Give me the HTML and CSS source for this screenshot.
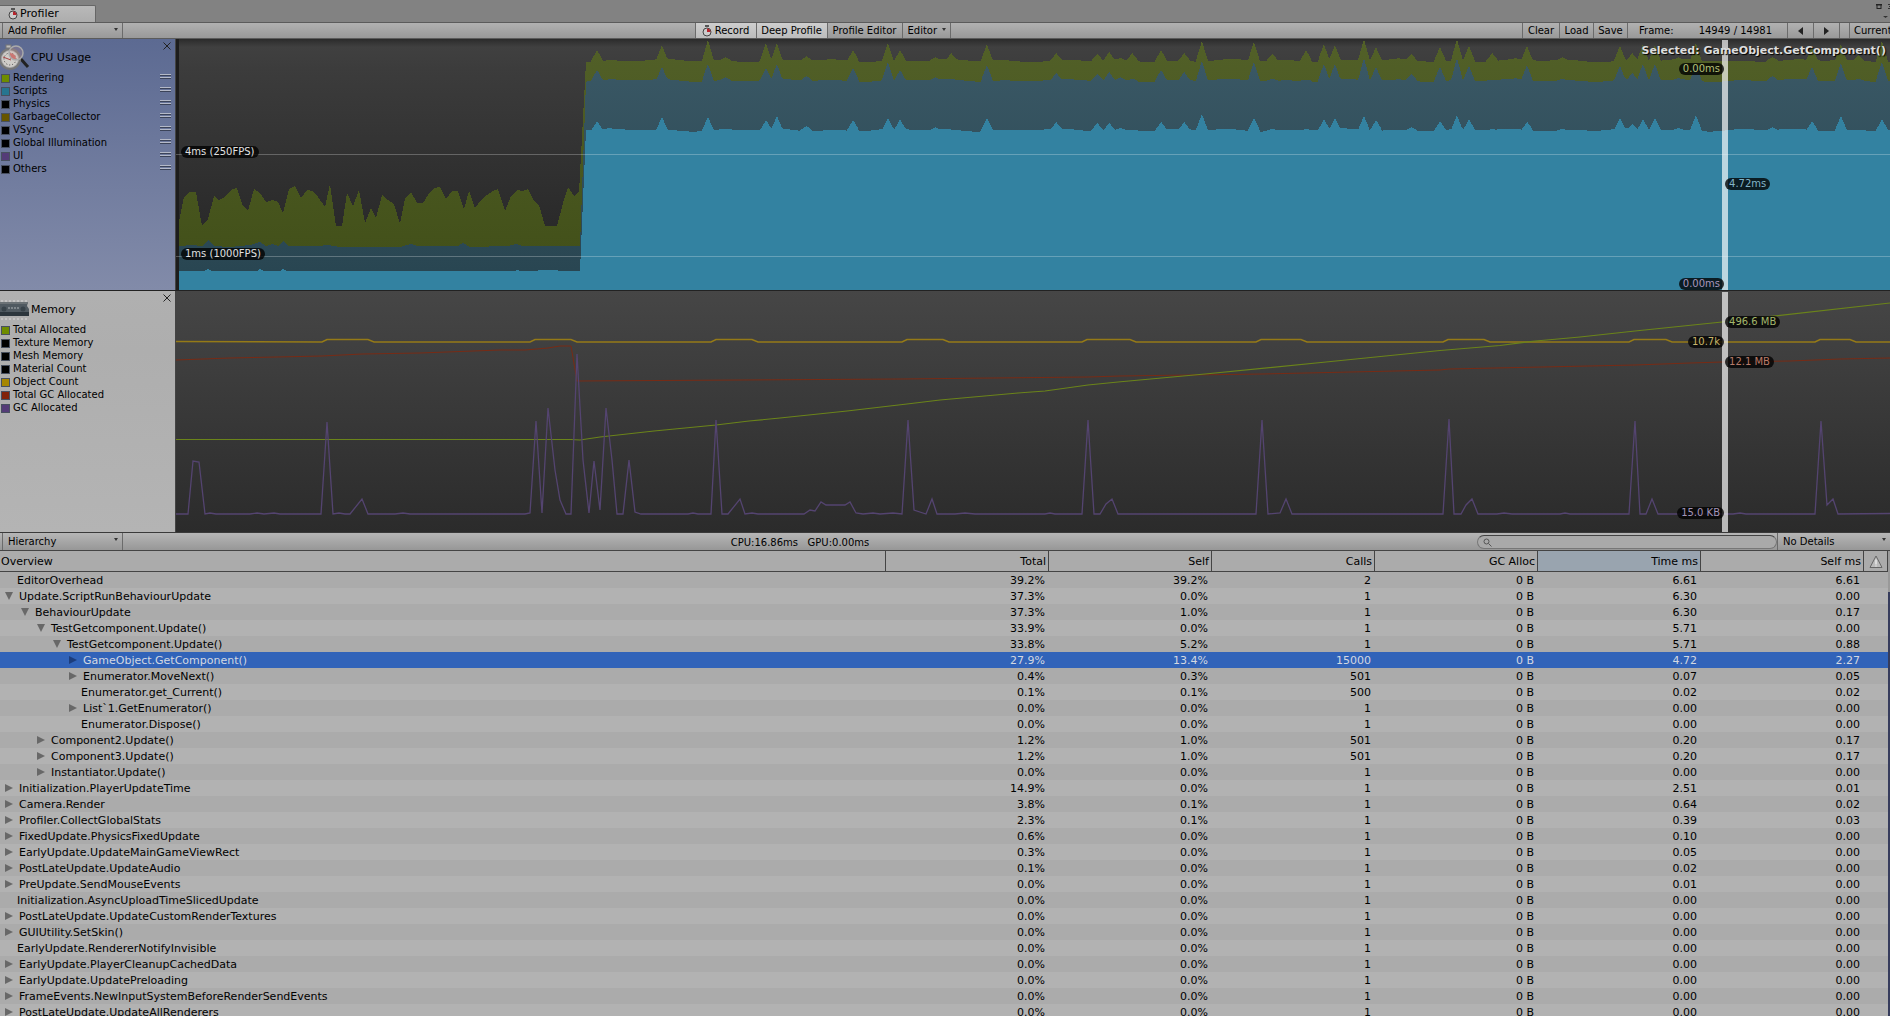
FILE: index.html
```html
<!DOCTYPE html>
<html lang="en">
<head>
<meta charset="utf-8">
<title>Profiler</title>
<link rel="stylesheet" href="styles.css">
</head>
<body>
<svg class="defs" width="0" height="0" aria-hidden="true">
  <symbol id="watch" viewBox="0 0 10 12">
    <rect x="3" y="0" width="4" height="2" fill="#555"/>
    <circle cx="5" cy="7" r="4" fill="#ccc" stroke="#444" stroke-width="1"/>
    <path d="M5 7V3.500A3.500 3.500 0 0 1 8.500 7Z" fill="#b8232c"/>
  </symbol>
</svg>
<header class="tabs">
  <button class="tab" type="button"><svg width="10" height="12"><use href="#watch"/></svg>Profiler</button>
  <div class="window-tools">
    <svg width="14" height="18" viewBox="0 0 14 18"><rect x="1" y="4.500" width="4" height="4" fill="none" stroke="#222"/><path d="M0 4h6v1.500H0z" fill="#222"/><path d="M12 4h2v1h-2zM13 6h1v1h-1zM12 8h2v1h-2z" fill="#333"/><path d="M7 16h5l-2.500 2z" fill="#333"/></svg>
  </div>
</header>
<nav class="toolbar">
  <span class="drop"><select aria-label="Add Profiler"><option>Add Profiler</option></select></span>
  <span class="space"></span>
  <div class="group">
    <button class="on record" type="button"><svg width="10" height="12"><use href="#watch"/></svg>Record</button>
    <button class="on deep" type="button">Deep Profile</button>
    <button class="pe" type="button">Profile Editor</button>
    <span class="drop editor"><select aria-label="Editor"><option>Editor</option></select></span>
  </div>
  <span class="space"></span>
  <div class="group right">
    <button class="clear" type="button">Clear</button>
    <button class="load" type="button">Load</button>
    <button class="load" type="button">Save</button>
    <span class="frame"><span>Frame:</span><span>14949 / 14981</span></span>
    <button class="step" type="button" aria-label="Previous frame"><svg width="5" height="8"><path d="M5 0v8L0 4z"/></svg></button>
    <button class="step" type="button" aria-label="Next frame"><svg width="5" height="8"><path d="M0 0v8l5-4z"/></svg></button>
    <span class="gap"></span>
    <button class="current" type="button">Current</button>
  </div>
</nav>
<section class="module cpu">
  <aside class="legend">
    <button class="close" type="button" aria-label="Close CPU Usage"><svg width="8" height="8"><path d="M.5.5l7 7m0-7l-7 7"/></svg></button>
    <h2><svg width="30" height="28" viewBox="0 0 30 28">
      <path d="M20 14l8 9" stroke="#222" stroke-width="3"/>
      <rect x="6" y="1" width="5" height="3" fill="#bbb" stroke="#777"/>
      <circle cx="10" cy="15" r="10" fill="#aaa" stroke="#777" stroke-width="2"/>
      <circle cx="10" cy="15" r="8" fill="#d0cdc8"/>
      <circle cx="10" cy="15" r="6" fill="none" stroke="#444" stroke-dasharray="1 2"/>
      <path d="M10 15V9a6 6 0 0 1 6 6z" fill="#c66d69"/>
      <path d="M3 13l8 3" stroke="#a44" stroke-width="1"/>
      <circle cx="16" cy="9" r="7" fill="#e29a9433" stroke="#aaa" stroke-width="1.500"/>
    </svg>CPU Usage</h2>
    <ul>
      <li class="green">Rendering</li><li class="blue">Scripts</li><li>Physics</li><li class="olive">GarbageCollector</li><li>VSync</li><li>Global Illumination</li><li class="purple">UI</li><li>Others</li>
    </ul>
  </aside>
  <div class="chart">
    <svg id="cpu-chart" viewBox="176 39 1714 251" preserveAspectRatio="none" shape-rendering="crispEdges">
      <defs><linearGradient id="g-green" x1="0" y1="40" x2="0" y2="250" gradientUnits="userSpaceOnUse"><stop stop-color="#526028"/><stop offset="1" stop-color="#43511a"/></linearGradient>
      <linearGradient id="g-teal" x1="0" y1="60" x2="0" y2="270" gradientUnits="userSpaceOnUse"><stop stop-color="#3a5865"/><stop offset="1" stop-color="#294652"/></linearGradient></defs>
      <rect x="176" y="39" width="3" height="251" fill="#1d1d1d"/>
    </svg>
    <div class="line four"><span class="pill">4ms (250FPS)</span></div>
    <div class="line one"><span class="pill">1ms (1000FPS)</span></div>
    <div class="cursor">
      <span class="pill before y1">0.00ms</span>
      <span class="pill after y2">4.72ms</span>
      <span class="pill before y3">0.00ms</span>
    </div>
    <div class="selected">Selected: GameObject.GetComponent()</div>
  </div>
</section>
<section class="module memory">
  <aside class="legend">
    <button class="close" type="button" aria-label="Close Memory"><svg width="8" height="8"><path d="M.5.5l7 7m0-7l-7 7"/></svg></button>
    <h2><svg width="30" height="22" viewBox="0 0 30 22">
      <path d="M1 2h27M1 20h27" stroke="#c4c4c4" stroke-width="2" stroke-dasharray="2 2"/>
      <path d="M0 3h28l-1 4 2 3v7H0z" fill="#505a61"/>
      <path d="M0 13h29v4H0z" fill="#2c363d"/><path d="M0 3h28v2H0z" fill="#6b7276"/>
      <circle cx="4" cy="10" r="2.500" fill="#38434a"/><circle cx="23" cy="10" r="2.500" fill="#38434a"/>
      <path d="M8 9h11" stroke="#7f878c" stroke-width="2" stroke-dasharray="2 1"/>
    </svg>Memory</h2>
    <ul>
      <li class="green">Total Allocated</li><li>Texture Memory</li><li>Mesh Memory</li><li>Material Count</li><li class="yellow">Object Count</li><li class="red">Total GC Allocated</li><li class="purple">GC Allocated</li>
    </ul>
  </aside>
  <div class="chart">
    <svg id="memory-chart" viewBox="176 291 1714 241" preserveAspectRatio="none"></svg>
    <div class="cursor">
      <span class="pill after m1">496.6 MB</span>
      <span class="pill before m2">10.7k</span>
      <span class="pill after m3">12.1 MB</span>
      <span class="pill before m4">15.0 KB</span>
    </div>
  </div>
</section>
<nav class="toolbar lower">
  <span class="drop"><select aria-label="View"><option>Hierarchy</option></select></span>
  <output>CPU:16.86ms&nbsp;&nbsp; GPU:0.00ms</output>
  <label class="search"><svg width="9" height="9" viewBox="0 0 9 9"><circle cx="3.500" cy="3.500" r="2.500"/><path d="M5.500 5.500l3 3"/></svg><input type="search" aria-label="Search"></label>
  <span class="drop details"><select aria-label="Details"><option>No Details</option></select></span>
</nav>
<main class="tree">
  <table>
    <colgroup><col><col class="num"><col class="num"><col class="num"><col class="num"><col class="num"><col class="num"><col class="warn"></colgroup>
    <thead><tr><th>Overview</th><th>Total</th><th>Self</th><th>Calls</th><th>GC Alloc</th><th class="sorted">Time ms</th><th>Self ms</th><th><svg width="14" height="14" viewBox="0 0 14 14"><path d="M7 1L13 12.500H1z" fill="#bbb" stroke="#666" stroke-linejoin="round"/><path d="M7 4.500v5m0 1v1" stroke="#ddd" stroke-width="2"/></svg></th></tr></thead>
    <tbody id="rows"></tbody>
  </table>
  <div class="scroll"></div>
</main>
<script src="profiler.js"></script>
</body>
</html>
```
FILE: styles.css
```css
* { box-sizing: border-box; }
body {
  margin: 0; height: 100vh; overflow: hidden;
  display: flex; flex-direction: column;
  background: #adadad; color: #000;
  font: 10px/12px "DejaVu Sans", Verdana, sans-serif;
}
button, select, input { font: inherit; color: inherit; margin: 0; padding: 0; border: 0; border-radius: 0; background: none; }
.defs { position: absolute; }

.tabs { flex: none; height: 22px; padding-top: 5px; background: #828282; display: flex; justify-content: space-between; }
.tab {
  width: 96px; padding-left: 8px; display: flex; align-items: center; gap: 2px;
  background: linear-gradient(#b9b9b9, #adadad); border: solid #666; border-width: 1px 1px 0 0; border-radius: 0 2px 0 0;
  font-size: 11px;
}
.window-tools { width: 14px; margin-top: -5px; }
.window-tools svg { display: block; }

.toolbar {
  flex: none; height: 17px; padding-left: 2px; display: flex;
  background: linear-gradient(#b1b1b1, #999); border: solid #5b5b5b; border-width: 1px 0;
  overflow: hidden;
}
.toolbar button, .drop { border-right: 1px solid #6b6b6b; white-space: nowrap; }
.drop { position: relative; width: 121px; border-left: 1px solid #6b6b6b; }
.drop select { appearance: none; width: 100%; height: 100%; padding-left: 5px; display: block; }
.drop::after {
  content: ""; position: absolute; right: 4px; top: 5px;
  border: solid transparent; border-width: 3px 2px 0; border-top-color: #333;
}
.space { flex: 1; }
.group { display: flex; }
.group .on { background: linear-gradient(#cecece, #bcbcbc); }
.toolbar .record { width: 62px; border-left: 1px solid #6b6b6b; display: flex; align-items: center; justify-content: center; gap: 3px; }
.deep { width: 71px; }
.pe { width: 75px; }
.editor { width: 48px; border-left: 0; }
.right { width: 368px; overflow: hidden; }
.right > * { flex: none; }
.right .clear { width: 38px; border-left: 1px solid #6b6b6b; }
.load { width: 34px; }
.frame { width: 160px; padding: 2px 15px 0 11px; display: flex; justify-content: space-between; border-right: 1px solid #6b6b6b; }
.step { width: 26px; display: grid; place-items: center; }
.step svg { fill: #222; }
.gap { width: 10px; border-right: 1px solid #6b6b6b; }
.toolbar .current { width: 60px; padding-left: 4px; text-align: left; }

.module { flex: none; height: 252px; display: flex; border-bottom: 1px solid #222; }
.memory { height: 242px; border-bottom-color: #3a3a3a; }
.legend { position: relative; flex: none; width: 176px; border-right: 1px solid #444; background: linear-gradient(#b0b0b0, #aeaeae 25%, #b4b4b4); }
.cpu .legend { background: linear-gradient(#5c6a92, #828ba9); }
.close { position: absolute; right: 4px; top: 3px; width: 8px; height: 8px; }
.close svg { display: block; fill: none; stroke: #222; }
.legend h2 { margin: 0; height: 32px; padding-top: 5px; display: flex; align-items: center; gap: 1px; font-size: 11px; font-weight: 400; }
.legend ul { margin: 0; padding: 0; list-style: none; }
.legend li { height: 13px; line-height: 14px; padding-left: 13px; position: relative; }
.legend li::before {
  content: ""; position: absolute; left: 1px; top: 3px; width: 7px; height: 7px;
  border: 1px solid #48505f; background: #000;
}
.cpu li::after {
  content: ""; position: absolute; right: 4px; top: 3px; width: 11px; height: 5px;
  background: linear-gradient(#b4b9c8 1px, #3b4359 1px, #3b4359 2px, transparent 2px, transparent 3px, #b4b9c8 3px, #b4b9c8 4px, #3b4359 4px);
}
.legend .green::before { background: #6e8c00; }
.legend .blue::before { background: #267590; }
.legend .olive::before { background: #665500; }
.legend .purple::before { background: #543b77; }
.legend .yellow::before { background: #a68600; }
.legend .red::before { background: #82230a; }

.chart { position: relative; flex: 1; min-width: 0; overflow: hidden; background: linear-gradient(#2b2b2b, #404040 8px, #3c3c3c 30px, #262626 220px); }
.memory .chart { background: linear-gradient(#464646, #2b2b2b); }
.chart > svg { display: block; width: 100%; height: 100%; }
.line { position: absolute; left: 0; right: 0; height: 1px; background: rgba(255, 255, 255, .25); }
.line .pill { left: 5px; top: -8px; color: #e0e0e0; }
.four { top: 115px; }
.one { top: 217px; }
.pill { position: absolute; height: 12px; padding: 0 4px; border-radius: 6px; background: rgba(0, 0, 0, .78); line-height: 12px; white-space: nowrap; }
.cursor { position: absolute; left: 90.2%; top: 1px; bottom: 0; width: 6px; background: rgba(255, 255, 255, .67); }
.before { right: 4px; }
.after { left: 3px; }
.y1 { top: 23px; color: #b4c078; }
.y2 { top: 138px; color: #83b4c8; }
.y3 { top: 238px; color: #a796bb; }
.m1 { top: 24px; color: #a3b66c; }
.m2 { top: 44px; color: #c9b66a; }
.m3 { top: 64px; color: #b97a68; }
.m4 { top: 215px; color: #a394b8; }
.selected { position: absolute; left: 85.5%; top: 5px; font-size: 11px; line-height: 14px; font-weight: 700; color: #ddd; text-shadow: 1px 1px 1px #000; white-space: nowrap; }

.lower { height: 18px; background: linear-gradient(#b6b6b6, #979797); border-top: 0; border-bottom: 1px solid #444; }
.lower output { flex: 1; padding-top: 4px; text-align: center; }
.search { width: 300px; height: 14px; margin-top: 2px; padding: 0 5px; display: flex; align-items: center; gap: 3px; border: 1px solid #777; border-top-color: #444; border-radius: 7px; background: #a9a9a9; }
.search svg { fill: none; stroke: #555; }
.search input { flex: 1; outline: 0; min-width: 0; height: 12px; }
.details { width: 113px; border-right: 0; }

.tree { flex: 1; min-height: 0; overflow: hidden; display: flex; font-size: 11px; line-height: 14px; }
.tree table { flex: 1; width: 0; table-layout: fixed; border-collapse: separate; border-spacing: 0; align-self: flex-start; }
.num { width: 163px; }
.warn { width: 24px; }
.tree th { height: 21px; padding: 2px 2px 0; font-weight: 400; text-align: right; border: solid #444; border-width: 0 1px 1px 0; background: #ababab; }
.tree th:first-child { text-align: left; padding-left: 1px; }
.tree th.sorted { background: #99a4af; }
.tree th svg { display: block; margin: 0 auto; }
.tree td { height: 16px; padding: 2px 4px 0 0; text-align: right; white-space: nowrap; }
.tree tr > :first-child { text-align: left; }
.tree tbody tr { background: #ababab; }
.tree tbody tr:nth-child(even) { background: #b2b2b2; }
.tree tbody tr.active { background: #3163b9; color: #d3d8e2; }
.name { display: flex; align-items: center; padding-left: calc(5px + var(--depth) * 16px); }
.name button { width: 8px; height: 8px; margin: 0 6px 2px 0; flex: none; background: #686868; clip-path: polygon(0 0, 100% 50%, 0 100%); }
.name button.open { clip-path: polygon(0 0, 100% 0, 50% 100%); }
.name.leaf { padding-left: calc(17px + var(--depth) * 16px); }
.active .name button { background: #1c3d7c; }
.scroll { width: 2px; background: linear-gradient(#999 41px, #363c5c 41px); }
```
FILE: profiler.js
```js
const NS = 'http://www.w3.org/2000/svg';
const cpu = document.getElementById('cpu-chart');
const memory = document.getElementById('memory-chart');

function shape(parent, tag, attrs) {
  const el = document.createElementNS(NS, tag);
  for (const key in attrs) el.setAttribute(key, attrs[key]);
  parent.appendChild(el);
}

// Frames before deep profiling: x and the top of each stacked area.
const idle = {
  green: '179,222 184,197 190,192 196,192 202,226 208,219 214,196 219,200 225,197 232,189 237,188 243,206 248,211 254,189 260,193 266,202 272,200 278,202 283,213 289,189 295,186 301,198 307,190 313,191 318,197 325,207 330,184 336,226 342,226 347,193 353,206 359,190 365,223 371,208 376,218 382,195 388,200 394,204 400,224 405,198 411,192 417,203 423,203 428,195 434,188 440,187 446,199 452,191 458,191 464,209 469,191 475,208 481,200 487,195 493,191 498,189 505,211 511,196 517,190 523,191 528,189 534,201 539,205 545,226 557,226 563,203 568,187 574,196 579,192',
  teal: '179,246 192,245 202,246 208,240 214,246 230,247 250,245 260,242 266,246 272,244 278,246 283,241 289,246 318,246 328,245 340,247 400,247 411,244 417,246 458,246 463,243 470,247 508,246 516,244 522,246 580,246',
  blue: '179,271 204,271 208,269 212,271 257,271 260,269 264,271 280,271 283,269 287,271 515,271 517,270 520,271 556,270 560,271 580,271'
};

// Spikes while deep profiling: x, then the top of rendering, overhead and scripts.
const spikes = [
  [597,50,70,121],[662,45,67,117],[708,40,64,117],[725,57,77,129],[766,43,68,120],[777,43,64,116],
  [806,56,76,126],[853,50,68,120],[888,43,62,118],[900,50,70,119],[935,57,77,127],[951,53,80,130],
  [987,44,65,118],[1056,53,73,122],[1097,54,74,123],[1109,52,72,123],[1120,58,77,128],[1132,53,79,130],
  [1161,50,70,122],[1184,53,72,122],[1202,41,61,114],[1254,42,62,118],[1272,54,79,129],[1306,50,80,129],
  [1324,44,64,119],[1335,45,64,118],[1364,39,58,116],[1376,47,67,120],[1398,58,79,130],[1411,54,74,127],
  [1440,47,67,121],[1457,39,58,115],[1469,46,66,119],[1492,53,80,129],[1515,58,78,130],[1527,46,65,122],
  [1562,57,79,129],[1620,46,66,118],[1632,53,73,124],[1643,44,64,119],[1655,45,64,118],[1678,57,78,128],
  [1696,43,64,115],[1772,57,76,127],[1812,47,67,121],[1841,44,63,116],[1858,55,79,130],[1882,41,62,119]
];

function busy(column, base) {
  const points = [];
  for (let x = 586; x <= 1890; x += 1) {
    let y = base + Math.sin(x / 9) * .8 + Math.sin(x / 23 + column) * .8;
    for (const s of spikes) {
      const d = Math.abs(x - s[0]);
      if (d < 6) y = Math.min(y, s[column] + (base - s[column]) * d / 6);
    }
    points.push(x + ',' + Math.round(y));
  }
  return points.join(' ');
}

[['green', 'url(#g-green)', 60.6], ['teal', 'url(#g-teal)', 80.4], ['blue', '#3382a1', 130]].forEach(([key, fill, base], i) => {
  shape(cpu, 'polygon', { points: `179,290 ${idle[key]} ${busy(i + 1, base)} 1890,290`, fill });
});

const bumps = [[322,368],[530,571],[711,752],[902,943],[1082,1130],[1256,1301],[1443,1484],[1629,1666],[1815,1850]];
const objects = '176,341.5 ' + bumps.map(([a, b]) => `${a},342 ${a + 5},339.5 ${b},339.5 ${b + 6},342`).join(' ') + ' 1890,342';

[
  [objects, '#957a17', 1.4],
  ['176,360 230,358 322,356 362,354 420,353 500,350 525,350 548,348 560,346 571,346 577,381 740,380 900,379 1088,377 1120,376 1262,374 1440,370 1449,369 1635,365 1690,363 1722,362 1790,361 1840,359 1890,358', '#782b15', 1],
  ['176,439.5 500,439.5 571,439.5 580,440 600,437 654,431 716,425 749,421 780,418 847,411 907,404 940,400 1018,393 1045,391 1088,385 1118,382 1205,374 1326,362 1440,350.5 1500,345.5 1530,341.5 1580,337 1635,331 1722,322 1765,317 1890,303', '#6b841a', 1.2],
  ['176,514 188,514 193,461 199,462 205,514 210,513 216,514 250,514 257,513 264,514 274,513 280,514 321,514 327,422 333,514 339,513 345,514 350,514 362,499 368,514 395,514 403,513 410,514 525,514 530,513 536,421 542,513 548,408 555,470 560,500 566,514 571,514 577,354 583,460 589,513 594,461 600,510 606,408 612,460 617,514 623,514 629,460 635,512 641,514 688,514 693,513 698,514 711,514 716,420 722,514 728,514 740,499 745,514 752,513 758,514 804,514 810,510 815,511 821,502 826,505 845,505 850,502 856,513 863,514 873,513 880,514 893,513 902,514 908,420 914,510 926,514 932,499 937,514 955,514 965,513 975,514 1045,514 1050,513 1055,514 1082,514 1088,420 1094,514 1100,514 1106,504 1112,499 1118,514 1256,514 1262,420 1268,514 1280,513 1286,499 1292,514 1443,514 1449,419 1454,514 1461,514 1466,505 1472,499 1478,514 1497,514 1504,513 1512,514 1560,514 1565,513 1570,514 1629,514 1635,421 1640,514 1646,514 1652,499 1658,514 1733,514 1740,513 1746,514 1815,514 1821,421 1827,505 1833,499 1838,514 1890,513.5', '#544470', 1.3]
].forEach(([points, stroke, width]) => shape(memory, 'polyline', { points, fill: 'none', stroke, 'stroke-width': width }));

// Depth, toggle (open, closed, none), name, total, self, calls, time, self time.
const rows = `0|none|EditorOverhead|39.2%|39.2%|2|6.61|6.61
0|open|Update.ScriptRunBehaviourUpdate|37.3%|0.0%|1|6.30|0.00
1|open|BehaviourUpdate|37.3%|1.0%|1|6.30|0.17
2|open|TestGetcomponent.Update()|33.9%|0.0%|1|5.71|0.00
3|open|TestGetcomponent.Update()|33.8%|5.2%|1|5.71|0.88
4|closed|GameObject.GetComponent()|27.9%|13.4%|15000|4.72|2.27
4|closed|Enumerator.MoveNext()|0.4%|0.3%|501|0.07|0.05
4|none|Enumerator.get_Current()|0.1%|0.1%|500|0.02|0.02
4|closed|List\`1.GetEnumerator()|0.0%|0.0%|1|0.00|0.00
4|none|Enumerator.Dispose()|0.0%|0.0%|1|0.00|0.00
2|closed|Component2.Update()|1.2%|1.0%|501|0.20|0.17
2|closed|Component3.Update()|1.2%|1.0%|501|0.20|0.17
2|closed|Instantiator.Update()|0.0%|0.0%|1|0.00|0.00
0|closed|Initialization.PlayerUpdateTime|14.9%|0.0%|1|2.51|0.01
0|closed|Camera.Render|3.8%|0.1%|1|0.64|0.02
0|closed|Profiler.CollectGlobalStats|2.3%|0.1%|1|0.39|0.03
0|closed|FixedUpdate.PhysicsFixedUpdate|0.6%|0.0%|1|0.10|0.00
0|closed|EarlyUpdate.UpdateMainGameViewRect|0.3%|0.0%|1|0.05|0.00
0|closed|PostLateUpdate.UpdateAudio|0.1%|0.0%|1|0.02|0.00
0|closed|PreUpdate.SendMouseEvents|0.0%|0.0%|1|0.01|0.00
0|none|Initialization.AsyncUploadTimeSlicedUpdate|0.0%|0.0%|1|0.00|0.00
0|closed|PostLateUpdate.UpdateCustomRenderTextures|0.0%|0.0%|1|0.00|0.00
0|closed|GUIUtility.SetSkin()|0.0%|0.0%|1|0.00|0.00
0|none|EarlyUpdate.RendererNotifyInvisible|0.0%|0.0%|1|0.00|0.00
0|closed|EarlyUpdate.PlayerCleanupCachedData|0.0%|0.0%|1|0.00|0.00
0|closed|EarlyUpdate.UpdatePreloading|0.0%|0.0%|1|0.00|0.00
0|closed|FrameEvents.NewInputSystemBeforeRenderSendEvents|0.0%|0.0%|1|0.00|0.00
0|closed|PostLateUpdate.UpdateAllRenderers|0.0%|0.0%|1|0.00|0.00`;

document.getElementById('rows').innerHTML = rows.split('\n').map((line, i) => {
  const [depth, state, name, total, self, calls, time, selfMs] = line.split('|');
  const toggle = state === 'none' ? '' : `<button type="button" class="${state}" aria-label="Toggle ${name}"></button>`;
  const cells = [total, self, calls, '0 B', time, selfMs, ''].map(c => `<td>${c}</td>`).join('');
  return `<tr${i === 5 ? ' class="active"' : ''}><td><div class="name${toggle ? '' : ' leaf'}" style="--depth:${depth}">${toggle}${name}</div></td>${cells}</tr>`;
}).join('');
```
